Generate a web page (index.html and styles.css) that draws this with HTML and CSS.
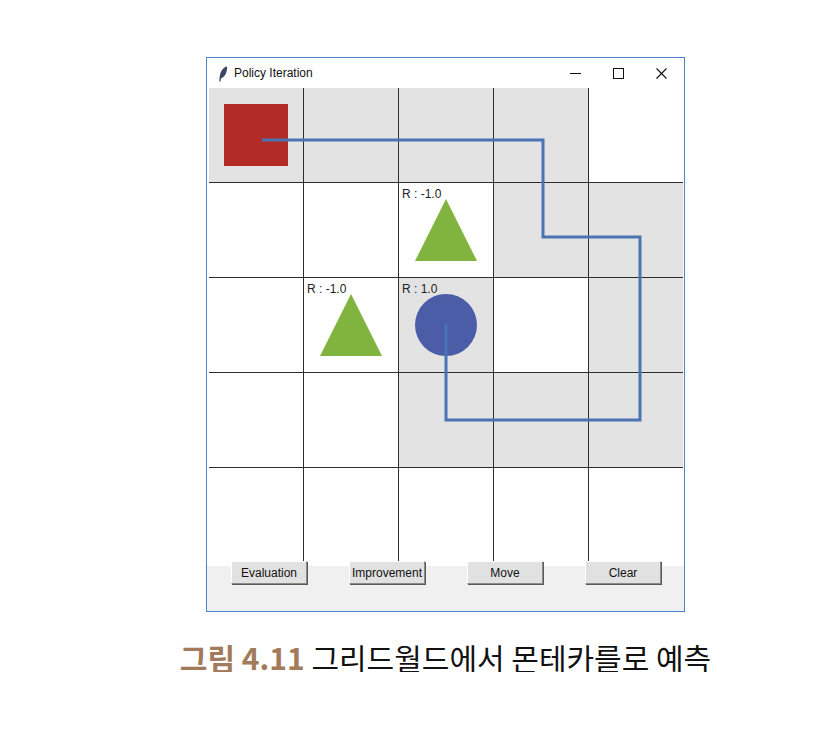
FILE: index.html
```html
<!DOCTYPE html>
<html>
<head>
  <meta charset="UTF-8" />
  <title>Policy Iteration</title>
  <link rel="stylesheet" href="styles.css">
</head>
<body>
  <div class="page">

    <!-- Tk window -->
    <div class="window">
      <div class="titlebar">
        <svg class="app-icon" width="10" height="16" viewBox="0 0 10 16">
          <path d="M9 0.5 C5.5 1 2.5 5 1.8 10 L1.2 15.5 L2.4 15.5 L3 12.5 C7 11 9.5 6 9 0.5 Z" fill="#3b4660" />
        </svg>
        <span class="title">Policy Iteration</span>
        <div class="controls">
          <div class="ctl"><svg width="11" height="11" viewBox="0 0 11 11"><path d="M0 5.5 H11" stroke="#111" stroke-width="1" /></svg></div>
          <div class="ctl"><svg width="11" height="11" viewBox="0 0 11 11"><rect x="0.5" y="0.5" width="10" height="10" fill="none" stroke="#111" stroke-width="1" /></svg></div>
          <div class="ctl"><svg width="11" height="11" viewBox="0 0 11 11"><path d="M0.5 0.5 L10.5 10.5 M10.5 0.5 L0.5 10.5" stroke="#111" stroke-width="1.1" /></svg></div>
        </div>
      </div>

      <!-- Canvas: 5x5 grid world -->
      <div class="canvas">
        <div class="grid">
          <!-- row 0 -->
          <div class="cell shaded"><div class="agent"></div></div>
          <div class="cell shaded"></div>
          <div class="cell shaded"></div>
          <div class="cell shaded"></div>
          <div class="cell"></div>
          <!-- row 1 -->
          <div class="cell"></div>
          <div class="cell"></div>
          <div class="cell">
            <span class="reward">R : -1.0</span>
            <svg class="triangle" width="62" height="62" viewBox="0 0 62 62"><polygon points="31,0 62,62 0,62" /></svg>
          </div>
          <div class="cell shaded"></div>
          <div class="cell shaded"></div>
          <!-- row 2 -->
          <div class="cell"></div>
          <div class="cell">
            <span class="reward">R : -1.0</span>
            <svg class="triangle" width="62" height="62" viewBox="0 0 62 62"><polygon points="31,0 62,62 0,62" /></svg>
          </div>
          <div class="cell shaded">
            <span class="reward">R : 1.0</span>
            <div class="goal"></div>
          </div>
          <div class="cell"></div>
          <div class="cell shaded"></div>
          <!-- row 3 -->
          <div class="cell"></div>
          <div class="cell"></div>
          <div class="cell shaded"></div>
          <div class="cell shaded"></div>
          <div class="cell shaded"></div>
          <!-- row 4 -->
          <div class="cell last"></div>
          <div class="cell last"></div>
          <div class="cell last"></div>
          <div class="cell last"></div>
          <div class="cell last"></div>
        </div>

        <!-- sampled episode path -->
        <svg class="path-overlay" width="474" height="478" viewBox="0 0 474 478">
          <polyline points="53,52 334,52 334,149 431,149 431,332 237,332 237,236" />
        </svg>
      </div>

      <div class="footer">
        <div class="buttons">
          <button class="tk-btn">Evaluation</button>
          <button class="tk-btn">Improvement</button>
          <button class="tk-btn">Move</button>
          <button class="tk-btn">Clear</button>
        </div>
      </div>
    </div>

    <p class="caption"><b>그림 4.11</b> 그리드월드에서 몬테카를로 예측</p>
  </div>
</body>
</html>
```

FILE: styles.css
```css
body {
  margin: 0;
  background: #fff;
  font-family: 'Liberation Sans', Arial, sans-serif;
}

.page {
  width: 479px;
  margin-left: 206px;
  padding-top: 57px;
  display: flex;
  flex-direction: column;
  align-items: center;
}

.window {
  width: 477px;
  border: 1px solid #4a86cc;
  background: #fff;
}

.titlebar {
  height: 30px;
  display: flex;
  align-items: center;
  padding-left: 11px;
}

.app-icon {
  margin-right: 6px;
  margin-top: 1px;
}

.title {
  font-size: 12px;
  color: #111;
}

.controls {
  margin-left: auto;
  display: flex;
  padding-right: 1px;
  height: 100%;
}

.ctl {
  width: 43px;
  display: flex;
  align-items: center;
  justify-content: center;
}

.canvas {
  position: relative;
  width: 474px;
  margin-left: 2px;
}

.grid {
  display: grid;
  grid-template-columns: repeat(5, 94px);
  grid-template-rows: repeat(4, 94px) 98px;
  gap: 1px;
  background: #2e2e2e;
}

.cell {
  position: relative;
  background: #fff;
  display: flex;
  align-items: center;
  justify-content: center;
}

.cell.shaded {
  background: #e3e3e3;
}

.cell.last {
  align-items: flex-start;
}

.agent {
  width: 64px;
  height: 62px;
  background: #b22b27;
  margin-top: -1px;
  margin-left: -1px;
}

.triangle polygon {
  fill: #80b43f;
}

.goal {
  width: 62px;
  height: 62px;
  border-radius: 50%;
  background: #4c5da8;
}

.reward {
  position: absolute;
  left: 3px;
  top: 4px;
  font-size: 12px;
  color: #222;
  z-index: 1;
}

.path-overlay {
  position: absolute;
  left: 0;
  top: 0;
  pointer-events: none;
}

.path-overlay polyline {
  fill: none;
  stroke: #4a74b3;
  stroke-width: 3;
}

.footer {
  height: 45px;
  background: #f0f0f0;
  display: flex;
  align-items: flex-start;
}

.buttons {
  display: flex;
  gap: 42px;
  padding-left: 24px;
  margin-top: -5px;
  position: relative;
}

.tk-btn {
  width: 76px;
  height: 23px;
  padding: 0;
  background: #e1e1e1;
  border: 1px solid;
  border-color: #fff #8a8a8a #8a8a8a #fff;
  box-shadow: 1px 1px 0 #5a5a5a;
  font-family: 'Liberation Sans', Arial, sans-serif;
  font-size: 12px;
  color: #111;
}

.caption {
  margin: 30px 0 0 0;
  white-space: nowrap;
  font-family: 'Noto Sans CJK KR', 'Noto Sans', sans-serif;
  font-size: 30px;
  line-height: 1;
  color: #111;
}

.caption b {
  color: #a37b5c;
  font-weight: bold;
}
```
